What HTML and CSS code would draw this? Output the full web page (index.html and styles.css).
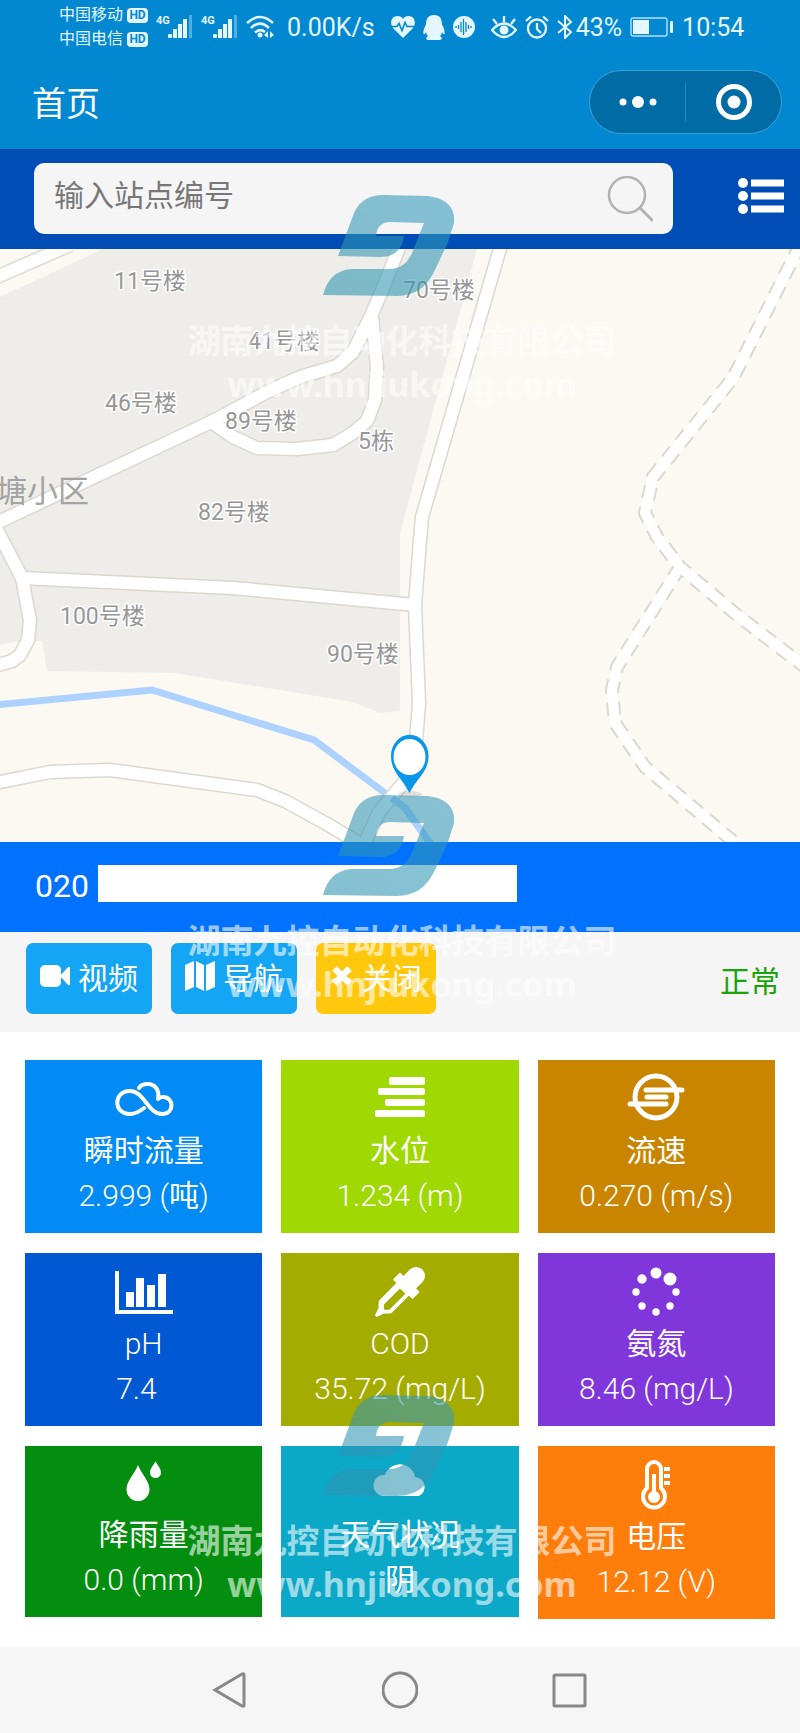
FILE: index.html
```html
<!DOCTYPE html>
<html lang="zh-CN">
<head>
<meta charset="utf-8">
<meta name="viewport" content="width=device-width, initial-scale=1">
<title>首页</title>
<link rel="stylesheet" href="styles.css">
</head>
<body>
<div class="page">
  <header class="header">
    <div class="status">
      <div class="carriers">
        <div class="carrier">中国移动<span class="hd">HD</span></div>
        <div class="carrier">中国电信<span class="hd">HD</span></div>
      </div>
      <div class="signal"><span class="gen">4G</span>
        <svg width="25" height="24" viewBox="0 0 25 24" fill="currentColor"><rect x="0" y="19" width="4" height="4" rx="1"/><rect x="5" y="14" width="4" height="9"/><rect x="10" y="9" width="4" height="14"/><rect x="15" y="4" width="4" height="19"/><rect x="21" y="0" width="3" height="23" opacity=".35"/></svg>
      </div>
      <div class="signal"><span class="gen">4G</span>
        <svg width="25" height="24" viewBox="0 0 25 24" fill="currentColor"><rect x="0" y="19" width="4" height="4" rx="1"/><rect x="5" y="14" width="4" height="9"/><rect x="10" y="9" width="4" height="14"/><rect x="15" y="4" width="4" height="19"/><rect x="21" y="0" width="3" height="23" opacity=".35"/></svg>
      </div>
      <svg width="28" height="24" viewBox="0 0 28 24" fill="none" stroke="currentColor" stroke-width="2.6"><path d="M1 8Q14-4 27 8M5 13Q14 4 23 13M9 17.500Q14 13 19 17"/><circle cx="14" cy="20" r="2.500" fill="currentColor" stroke="none"/><path d="M18 20l4-4v7zM24 16l4 4-4 3z" fill="currentColor" stroke="none"/></svg>
      <span class="speed">0.00K/s</span>
      <svg class="wide-left" width="24" height="22" viewBox="0 0 24 22"><path fill="currentColor" d="M12 22L2 12C-2 6 1 0 6.500 0 9 0 11 1 12 3 13 1 15 0 17.500 0 23 0 26 6 22 12z"/><path d="M0 10.500h6l2-3 3 7 3-8 2 4h8" fill="none" stroke="#0288d1" stroke-width="1.6"/></svg>
      <svg width="22" height="25" viewBox="0 0 22 25" fill="currentColor"><path d="M11 0C5 0 3 4 3 9.500 1 13 0 16 .5 19c1 1 2-1 2.500-2 .3 2 1 3 2 4-2 1-2.500 4 0 4h12c2.500 0 2-3 0-4 1-1 1.700-2 2-4 .5 1 1.500 3 2.500 2 .5-3-.5-6-2.500-9.500C19 4 17 0 11 0z"/></svg>
      <svg width="22" height="22" viewBox="0 0 22 22"><circle cx="11" cy="11" r="11" fill="currentColor"/><path d="M3 10v2M5.500 9v4M8 6v10M10.500 3v16M13 6v10M15.500 9v4M18 10v2" stroke="#0288d1" stroke-width="1.300"/></svg>
      <svg class="wide-left" width="26" height="24" viewBox="0 0 26 24" fill="none" stroke="currentColor" stroke-width="2.300"><path d="M1 15Q13 2 25 15Q13 29 1 15zM13 7V1M6 9L2 4M20 9l4-5"/><circle cx="13" cy="15" r="4.500" fill="currentColor" stroke="none"/></svg>
      <svg width="24" height="24" viewBox="0 0 24 24" fill="none" stroke="currentColor" stroke-width="2.300"><circle cx="12" cy="13.500" r="9"/><path d="M12 8v6l4 4M1 6l5-4.500M23 6l-5-4.500"/></svg>
      <div class="battery">
        <svg width="16" height="24" viewBox="0 0 16 24" fill="none" stroke="currentColor" stroke-width="2"><path d="M1 6l13 11-6 6V1l6 6L1 18"/></svg>
        <span>43%</span>
      </div>
      <svg width="44" height="20" viewBox="0 0 44 20"><rect x="1" y="1" width="36" height="18" rx="2" fill="none" stroke="currentColor" stroke-width="1.400" opacity=".8"/><rect x="3" y="3" width="16" height="14" fill="currentColor"/><rect x="40" y="4" width="3" height="12" rx="1" fill="currentColor"/></svg>
      <time>10:54</time>
    </div>
    <div class="titlebar">
      <h1 class="title">首页</h1>
      <div class="capsule">
        <button class="capsule-btn" aria-label="更多"><svg width="38" height="12" viewBox="0 0 38 12" fill="#fff"><circle cx="4" cy="6" r="3.500"/><circle cx="19" cy="6" r="6"/><circle cx="34" cy="6" r="3.500"/></svg></button>
        <span class="divider"></span>
        <button class="capsule-btn" aria-label="关闭小程序"><svg width="36" height="36" viewBox="0 0 36 36"><circle cx="18" cy="18" r="15.500" fill="none" stroke="#fff" stroke-width="5"/><circle cx="18" cy="18" r="6.500" fill="#fff"/></svg></button>
      </div>
    </div>
  </header>

  <form class="search">
    <label class="search-box">
      <input class="search-input" type="text" placeholder="输入站点编号" aria-label="输入站点编号">
      <svg width="46" height="46" viewBox="0 0 46 46" fill="none" stroke="#b2b2b2"><circle cx="20" cy="19" r="18" stroke-width="2.500"/><path d="M33 32l12 12" stroke-width="3" stroke-linecap="round"/></svg>
    </label>
    <button class="menu" type="button" aria-label="站点列表"><svg width="46" height="36" viewBox="0 0 46 36" fill="#fff"><circle cx="5" cy="5" r="5"/><circle cx="5" cy="18" r="5"/><circle cx="5" cy="31" r="5"/><path d="M13 1.500h33v7H13zM13 14.500h33v7H13zM13 27.500h33v7H13z"/></svg></button>
  </form>

  <svg class="map" viewBox="0 249 800 593" preserveAspectRatio="xMidYMid slice" role="img" aria-label="站点地图">
    <rect y="200" width="800" height="700" fill="#fcf9f2"/>
    <path fill="#eeede9" d="M0 297L103 249H477L400 533V711L380 713 353 702 175 673 47 671 42 641 20 641 0 645z"/>
    <path class="river" d="M-5 705L152 690 314 740 385 793 405 808 435 850"/>
    <g class="casing">
      <path d="M-10 280L70 245"/>
      <path d="M-10 526L213 421 267 392 300 377 337 366 353 352 370 318 383 288 402 240"/>
      <path d="M213 423L233 437 257 448 297 449 333 445 353 433 367 421 375 400 377 367 372 317"/>
      <path d="M-5 526L22 578 30 620 28 640 20 655 12 661 -5 666"/>
      <path d="M22 578L233 588 415 605"/>
      <path d="M501 245L422 517 420 540 415 605 419 703 415 755 404 782 379 812 364 845"/>
      <path d="M-5 783L50 772 110 770 257 790 285 801 327 824 362 845"/>
    </g>
    <g class="casing casing-dashed">
      <path d="M800 245L733 378 653 477 645 513 657 537 680 567 737 615 805 667"/>
      <path d="M680 567L617 667 612 690 615 723 645 767 735 843"/>
    </g>
    <g class="road">
      <path d="M-10 280L70 245"/>
      <path d="M-10 526L213 421 267 392 300 377 337 366 353 352 370 318 383 288 402 240"/>
      <path d="M213 423L233 437 257 448 297 449 333 445 353 433 367 421 375 400 377 367 372 317"/>
      <path d="M-5 526L22 578 30 620 28 640 20 655 12 661 -5 666"/>
      <path d="M22 578L233 588 415 605"/>
      <path d="M501 245L422 517 420 540 415 605 419 703 415 755 404 782 379 812 364 845"/>
      <path d="M-5 783L50 772 110 770 257 790 285 801 327 824 362 845"/>
    </g>
    <g class="road road-minor">
      <path d="M800 245L733 378 653 477 645 513 657 537 680 567 737 615 805 667"/>
      <path d="M680 567L617 667 612 690 615 723 645 767 735 843"/>
    </g>
    <path class="river" d="M392 798L405 808 435 850"/>
    <g class="label">
      <text x="114" y="289">11号楼</text>
      <text x="248" y="349">41号楼</text>
      <text x="403" y="298">70号楼</text>
      <text x="105" y="411">46号楼</text>
      <text x="225" y="429">89号楼</text>
      <text x="358" y="449">5栋</text>
      <text x="198" y="520">82号楼</text>
      <text x="60" y="624">100号楼</text>
      <text x="327" y="662">90号楼</text>
    </g>
    <text class="district" x="89" y="502" text-anchor="end">塘小区</text>
    <ellipse cx="410" cy="794" rx="12" ry="3" fill="#000" opacity=".1"/>
    <path fill="#0a97ea" d="M409.500 793C402 778 391 772 391 756a18.500 21 0 0 1 37.500 0C428.500 772 417 778 409.500 793z"/>
    <ellipse cx="409.500" cy="757" rx="16" ry="18" fill="#fff"/>
  </svg>

  <div class="station"><span class="station-id">020</span><span class="station-name"></span></div>

  <div class="actions">
    <button class="btn"><svg width="30" height="22" viewBox="0 0 30 22" fill="#fff"><rect width="21" height="22" rx="5"/><path d="M20 11l8-9q2-1 2 1v16q0 2-2 1z"/></svg>视频</button>
    <button class="btn"><svg width="30" height="30" viewBox="0 0 30 30" fill="#fff"><path d="M0 4l9-4v26l-9 4zM11 0l8 4v26l-8-4zM21 4l9-4v26l-9 4z"/></svg>导航</button>
    <button class="btn btn-warn"><svg width="24" height="22" viewBox="0 0 24 22"><path d="M4.500 3.500l15 15M19.500 3.500l-15 15" stroke="#fff" stroke-width="6.500"/></svg>关闭</button>
    <span class="state">正常</span>
  </div>

  <main class="grid">
    <section class="card flow">
      <svg class="icon" viewBox="0 0 72 52"><path fill="none" stroke="#fff" stroke-width="4" stroke-linecap="round" stroke-linejoin="round" d="M36 35C31 39 27 41 22 41 5 41 5 18 22 18 36 18 40 41 54 41 67 41 66 24 55 24 53 24 51 25 50 26 52 16 46 11 40 11 35 11 32 13 31 15"/></svg>
      <h2>瞬时流量</h2><p>2.999 (<span class="unit">吨</span>)</p>
    </section>
    <section class="card level">
      <svg class="icon" viewBox="0 0 72 52" fill="#fff"><rect x="25" y="4" width="36" height="8" rx="2"/><rect x="14" y="15" width="47" height="7" rx="2"/><rect x="21" y="26" width="40" height="7" rx="2"/><rect x="11" y="37" width="50" height="7" rx="2"/></svg>
      <h2>水位</h2><p>1.234 (m)</p>
    </section>
    <section class="card speedy">
      <svg class="icon" viewBox="0 0 72 52" fill="none" stroke="#fff" stroke-width="5" stroke-linecap="round"><circle cx="36" cy="24" r="21"/><path d="M26 17H62M27 24H46M10 31H46"/></svg>
      <h2>流速</h2><p>0.270 (m/s)</p>
    </section>
    <section class="card ph">
      <svg class="icon" viewBox="0 0 72 52" fill="#fff"><path d="M7 5h4v39h54v4H7zM18 26h8v15h-8zM28 12h8v29h-8zM39 19h8v22h-8zM50 8h8v33h-8z"/></svg>
      <h2 class="latin">pH</h2><p>7.4&nbsp;&nbsp;</p>
    </section>
    <section class="card cod">
      <svg class="icon" viewBox="0 0 72 52" fill="#fff"><path transform="translate(11 1) scale(.0279)" d="M1698 94q94 94 94 226.500t-94 225.500l-225 223 104 104q10 10 10 23t-10 23l-210 210q-10 10-23 10t-23-10l-105-105-603 603q-37 37-90 37h-203l-256 128-64-64 128-256v-203q0-53 37-90l603-603-105-105q-10-10-10-23t10-23l210-210q10-10 23-10t23 10l104 104 223-225q93-94 225.500-94t226.500 94zm-1186 1442l576-576-192-192-576 576v192h192z"/></svg>
      <h2 class="latin">COD</h2><p>35.72 (mg/L)</p>
    </section>
    <section class="card nh">
      <svg class="icon" viewBox="0 0 72 52" fill="#fff"><circle cx="36" cy="7" r="5.500"/><circle cx="50" cy="13" r="6.500"/><circle cx="56" cy="26" r="3.700"/><circle cx="50" cy="40" r="3.700"/><circle cx="36" cy="46" r="3.700"/><circle cx="22" cy="40" r="3.700"/><circle cx="16" cy="26" r="3.700"/><circle cx="22" cy="13" r="4.700"/></svg>
      <h2>氨氮</h2><p>8.46 (mg/L)</p>
    </section>
    <section class="card rain">
      <svg class="icon icon-short" viewBox="0 0 72 50" fill="#fff"><path d="M30 6C33.500 15 41.500 22 41.500 30.500a11.500 11.500 0 0 1-23 0C18.500 22 26.500 15 30 6zM47.500 2C49 6 53 9 53 13.500a5.500 5.500 0 0 1-11 0C42 9 46 6 47.500 2z"/></svg>
      <h2>降雨量</h2><p>0.0 (mm)</p>
    </section>
    <section class="card weather">
      <svg class="icon icon-short" viewBox="0 0 72 50" fill="#fff"><path d="M19 37A10.500 10.500 0 1 1 21 16A15.500 15.500 0 0 1 51 18A10 10 0 0 1 55 37z"/></svg>
      <h2>天气状况</h2><p class="unit">阴</p>
    </section>
    <section class="card volt">
      <svg class="icon" viewBox="0 0 72 52"><path d="M27 29V10a7 7 0 0 1 14 0v19a11 11 0 1 1-14 0z" fill="none" stroke="#fff" stroke-width="4"/><circle cx="34" cy="38" r="6" fill="#fff"/><path d="M34 38V15" stroke="#fff" stroke-width="4"/><path d="M44 8h6v4h-6zM44 15h6v4h-6zM44 22h6v4h-6z" fill="#fff"/></svg>
      <h2>电压</h2><p>12.12 (V)</p>
    </section>
  </main>

  <nav class="nav">
    <button aria-label="返回"><svg width="36" height="38" viewBox="0 0 36 38"><path d="M3 19L30 3q2-1 2 1v30q0 2-2 1z"/></svg></button>
    <button aria-label="主页"><svg width="36" height="38" viewBox="0 0 36 38"><circle cx="18" cy="19" r="17"/></svg></button>
    <button aria-label="最近任务"><svg width="36" height="38" viewBox="0 0 36 38"><rect x="2" y="4" width="31" height="31" rx="1"/></svg></button>
  </nav>

  <div class="watermarks" aria-hidden="true">
    <svg class="defs" width="0" height="0"><defs>
      <linearGradient id="wm" x1="0" y1="1" x2="1" y2="0"><stop offset="0" stop-color="#2c93ad"/><stop offset="1" stop-color="#3598bd"/></linearGradient>
      <path id="mark" fill="url(#wm)" opacity=".58" d="M15 61L31 18Q39 0 60 0L105 1C124 3 133 14 131 28L125 47 112 75Q100 101 74 101L0 100Q6 76 28 74L66 74Q82 74 89 58L101 28 66 27Q54 28 53 41L81 41Q78 62 57 62z"/>
    </defs></svg>
    <div class="mark"><svg class="mark-logo" width="131" height="101" viewBox="0 0 131 101"><use href="#mark"/></svg><span class="mark-name">湖南九控自动化科技有限公司</span><span class="mark-url">www.hnjiukong.com</span></div>
    <div class="mark"><svg class="mark-logo" width="131" height="101" viewBox="0 0 131 101"><use href="#mark"/></svg><span class="mark-name">湖南九控自动化科技有限公司</span><span class="mark-url">www.hnjiukong.com</span></div>
    <div class="mark"><svg class="mark-logo" width="131" height="101" viewBox="0 0 131 101"><use href="#mark"/></svg><span class="mark-name">湖南九控自动化科技有限公司</span><span class="mark-url">www.hnjiukong.com</span></div>
  </div>
</div>
</body>
</html>
```
FILE: styles.css
```css
* { box-sizing: border-box; }
body {
  margin: 0;
  background: #fff;
  font-family: Roboto, "Noto Sans CJK SC", sans-serif;
}
h1, h2, p { margin: 0; font-weight: inherit; font-size: inherit; }
button { border: 0; padding: 0; margin: 0; background: none; font: inherit; color: inherit; display: flex; align-items: center; }
svg { flex: none; }
.page { position: relative; overflow: hidden; min-height: 100vh; display: flex; flex-direction: column; }

.header { background: #0288d1; color: #fff; }
.status { height: 54px; padding-left: 59px; display: flex; align-items: center; gap: 8px; color: #e4f6ff; font-size: 25px; white-space: nowrap; }
.carrier { display: flex; align-items: center; gap: 4px; font-size: 16px; line-height: 24px; }
.hd { width: 21px; height: 15px; border-radius: 4px; background: #e4f6ff; color: #0288d1; font-size: 12px; font-weight: 700; line-height: 15px; text-align: center; }
.signal { display: flex; align-items: flex-start; }
.gen { width: 12px; font-size: 11px; font-weight: 700; line-height: 12px; }
.speed { margin-left: 5px; }
.wide-left { margin-left: 8px; }
.battery { display: flex; align-items: center; gap: 3px; }
.titlebar { height: 95px; padding: 0 18px 0 32px; display: flex; align-items: center; justify-content: space-between; }
.title { font-size: 34px; }
.capsule { width: 193px; height: 64px; border: 1px solid #3fa0d6; border-radius: 32px; background: #006ca5; display: flex; align-items: center; }
.capsule-btn { flex: 1; height: 100%; justify-content: center; }
.divider { width: 1px; height: 38px; background: #2f86b5; }

.search { background: #004eb5; padding: 14px 16px 15px 34px; display: flex; align-items: center; gap: 65px; }
.search-box { flex: 1; min-width: 0; height: 71px; padding: 0 20px; border-radius: 10px; background: #f5f5f5; display: flex; align-items: center; }
.search-input { flex: 1; min-width: 0; border: 0; padding: 0 0 6px; outline: 0; background: none; font: inherit; font-size: 30px; color: #333; }
.search-input::placeholder { color: #777; opacity: 1; }
.menu { padding-bottom: 6px; }

.map { display: block; width: 100%; height: auto; }
.river { fill: none; stroke: #aed2ff; stroke-width: 7; }
.casing { fill: none; stroke: #dcd8cf; stroke-width: 15; stroke-linejoin: round; }
.casing-dashed { stroke-width: 14; stroke-dasharray: 13 9; }
.road { fill: none; stroke: #fff; stroke-width: 12; stroke-linejoin: round; }
.road-minor { stroke-width: 10; }
.label { font-size: 23px; fill: #969696; stroke: #fff; stroke-width: 3; stroke-linejoin: round; paint-order: stroke; }
.district { font-size: 31px; fill: #a3a3a3; }

.station { height: 90px; padding: 0 0 8px 35px; background: #0072ff; color: #fff; font-size: 32px; display: flex; align-items: center; gap: 9px; }
.station-id { padding-top: 6px; }
.station-name { width: 419px; height: 37px; background: #fff; }

.actions { padding: 11px 20px 18px 26px; background: #f5f5f5; display: flex; align-items: center; gap: 19px; font-size: 30px; }
.btn { height: 71px; padding: 0 14px 6px; gap: 8px; border-radius: 7px; background: #14a6f4; color: #fff; }
.btn-warn { background: #ffc80d; }
.state { margin-left: auto; color: #1aa40a; }

.grid { flex: 1; display: grid; grid-template-columns: repeat(3, 1fr); gap: 20px 19px; align-items: start; align-content: start; padding: 28px 25px; }
.card { padding: 13px 0 15px; display: flex; flex-direction: column; align-items: center; color: #fff; font-size: 30px; font-weight: 300; line-height: 45px; }
.card h2, .unit { font-weight: 400; }
.card .latin { font-weight: 300; }
.icon { width: 72px; height: 52px; margin-bottom: 3px; }
.icon-short { height: 50px; }
.flow { background: #028bf5; }
.level { background: #9fd802; }
.speedy { background: #c98500; }
.ph { background: #0059d3; }
.cod { background: #a5ac00; }
.nh { background: #7f36da; }
.rain { background: #048e0f; }
.weather { background: #0ba8c8; }
.volt { background: #ff7d0b; }

.nav { height: 86px; background: #f6f6f6; display: flex; align-items: center; justify-content: center; gap: 134px; }
.nav svg { fill: none; stroke: #888; stroke-width: 3; }

.watermarks { position: absolute; top: 195px; left: 0; right: 0; padding-left: 4px; pointer-events: none; }
.defs { position: absolute; }
.mark { height: 600px; display: flex; flex-direction: column; align-items: center; color: rgba(255, 255, 255, .6); font-weight: 700; line-height: 43px; }
.mark:last-child { height: auto; }
.mark-logo { margin: 0 28px 24px 0; }
.mark-name { font-size: 33px; }
.mark-url { font-family: "Noto Sans", sans-serif; font-size: 34px; }
```
